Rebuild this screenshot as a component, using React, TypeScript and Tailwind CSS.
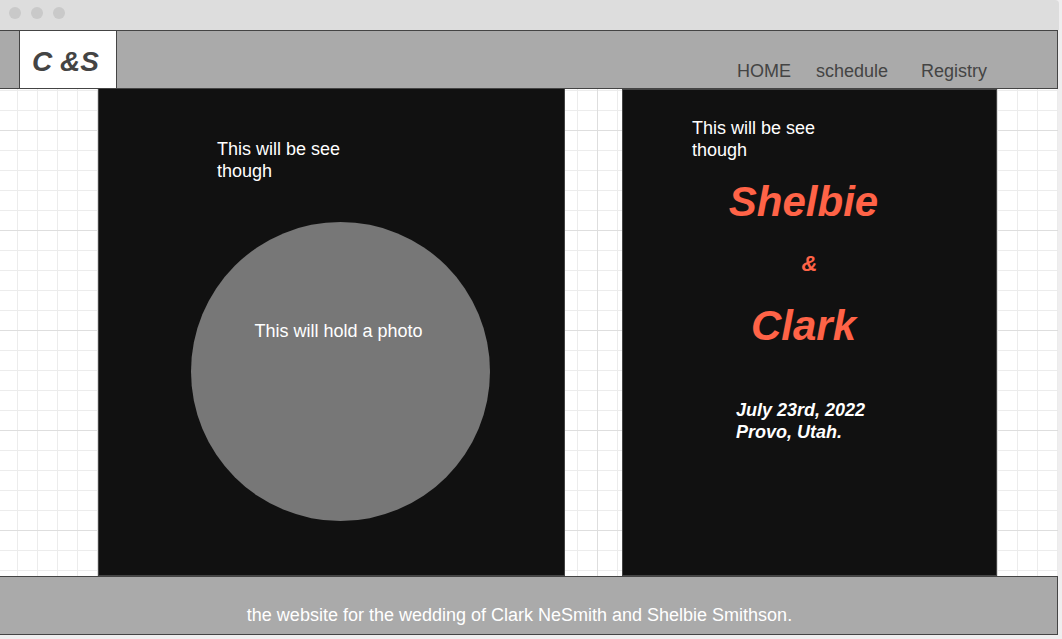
const gridLines =
  "bg-[linear-gradient(to_right,#dedede_1px,transparent_1px),linear-gradient(to_bottom,#dedede_1px,transparent_1px),linear-gradient(to_right,#ececec_1px,transparent_1px),linear-gradient(to_bottom,#ececec_1px,transparent_1px)] bg-[size:100px_100px,100px_100px,20px_20px,20px_20px] bg-[position:97px_0px,0px_41px,17px_0px,0px_1px]";

function WindowBar() {
  return (
    <div className="mr-[3px] flex h-[30px] items-start gap-[10px] rounded-tr bg-[#ddd] pt-[7px] pl-[9px]">
      <span className="size-3 rounded-full bg-[#c9c9c9]" />
      <span className="size-3 rounded-full bg-[#c9c9c9]" />
      <span className="size-3 rounded-full bg-[#c9c9c9]" />
    </div>
  );
}

function Header() {
  return (
    <header className="flex h-[59px] justify-between border border-l-0 border-[#444] bg-[#aaa] pl-[19px] text-[#444]">
      <a
        href="#home"
        className="flex items-center border-x border-[#444] bg-white pt-1 pr-[17px] pl-3 text-[28px] leading-8 font-bold whitespace-nowrap italic"
      >
        C &amp;S
      </a>
      <nav className="flex gap-[25px] pt-[29px] pr-[70px]">
        <a href="#home">HOME</a>
        <a href="#schedule">schedule</a>
        <a href="#registry" className="pl-2">
          Registry
        </a>
      </nav>
    </header>
  );
}

function PhotoPanel() {
  return (
    <section className="border border-t-0 border-[#444] bg-[#111] pt-[49px] pb-[53px] pl-[92px]">
      <p className="ml-[26px] w-[140px]">This will be see though</p>
      <div className="mt-10 size-[299px] rounded-full bg-[#777] pt-[98px] pr-1 text-center">
        This will hold a photo
      </div>
    </section>
  );
}

function NamesPanel() {
  return (
    <section className="border border-[#444] bg-[#111] pt-[27px]">
      <p className="ml-[69px] w-[140px]">This will be see though</p>
      <h1 className="mt-[17px] text-center leading-[48px] font-bold text-[#ff6347] italic">
        <span className="block pr-3 text-[42px]">Shelbie</span>
        <span className="my-6 block text-[22px] leading-7">&amp;</span>
        <span className="block pr-3 text-[42px]">Clark</span>
      </h1>
      <p className="mt-[49px] ml-[113px] font-bold italic">
        July 23rd, 2022
        <br />
        Provo, Utah.
      </p>
    </section>
  );
}

export default function App() {
  return (
    <div className="min-h-screen bg-[#efeeef] font-['Liberation_Sans',Arial,sans-serif] text-[18px] leading-[22px] text-white">
      <WindowBar />
      <div className="mr-1">
        <Header />
        <main
          className={`grid min-h-[487px] grid-cols-[467fr_375fr] gap-[57px] bg-white pr-[61px] pl-[98px] ${gridLines}`}
        >
          <PhotoPanel />
          <NamesPanel />
        </main>
        <footer className="h-[59px] border border-l-0 border-[#444] bg-[#aaa] pt-[27px] pr-[18px] text-center">
          the website for the wedding of Clark NeSmith and Shelbie Smithson.
        </footer>
      </div>
    </div>
  );
}
